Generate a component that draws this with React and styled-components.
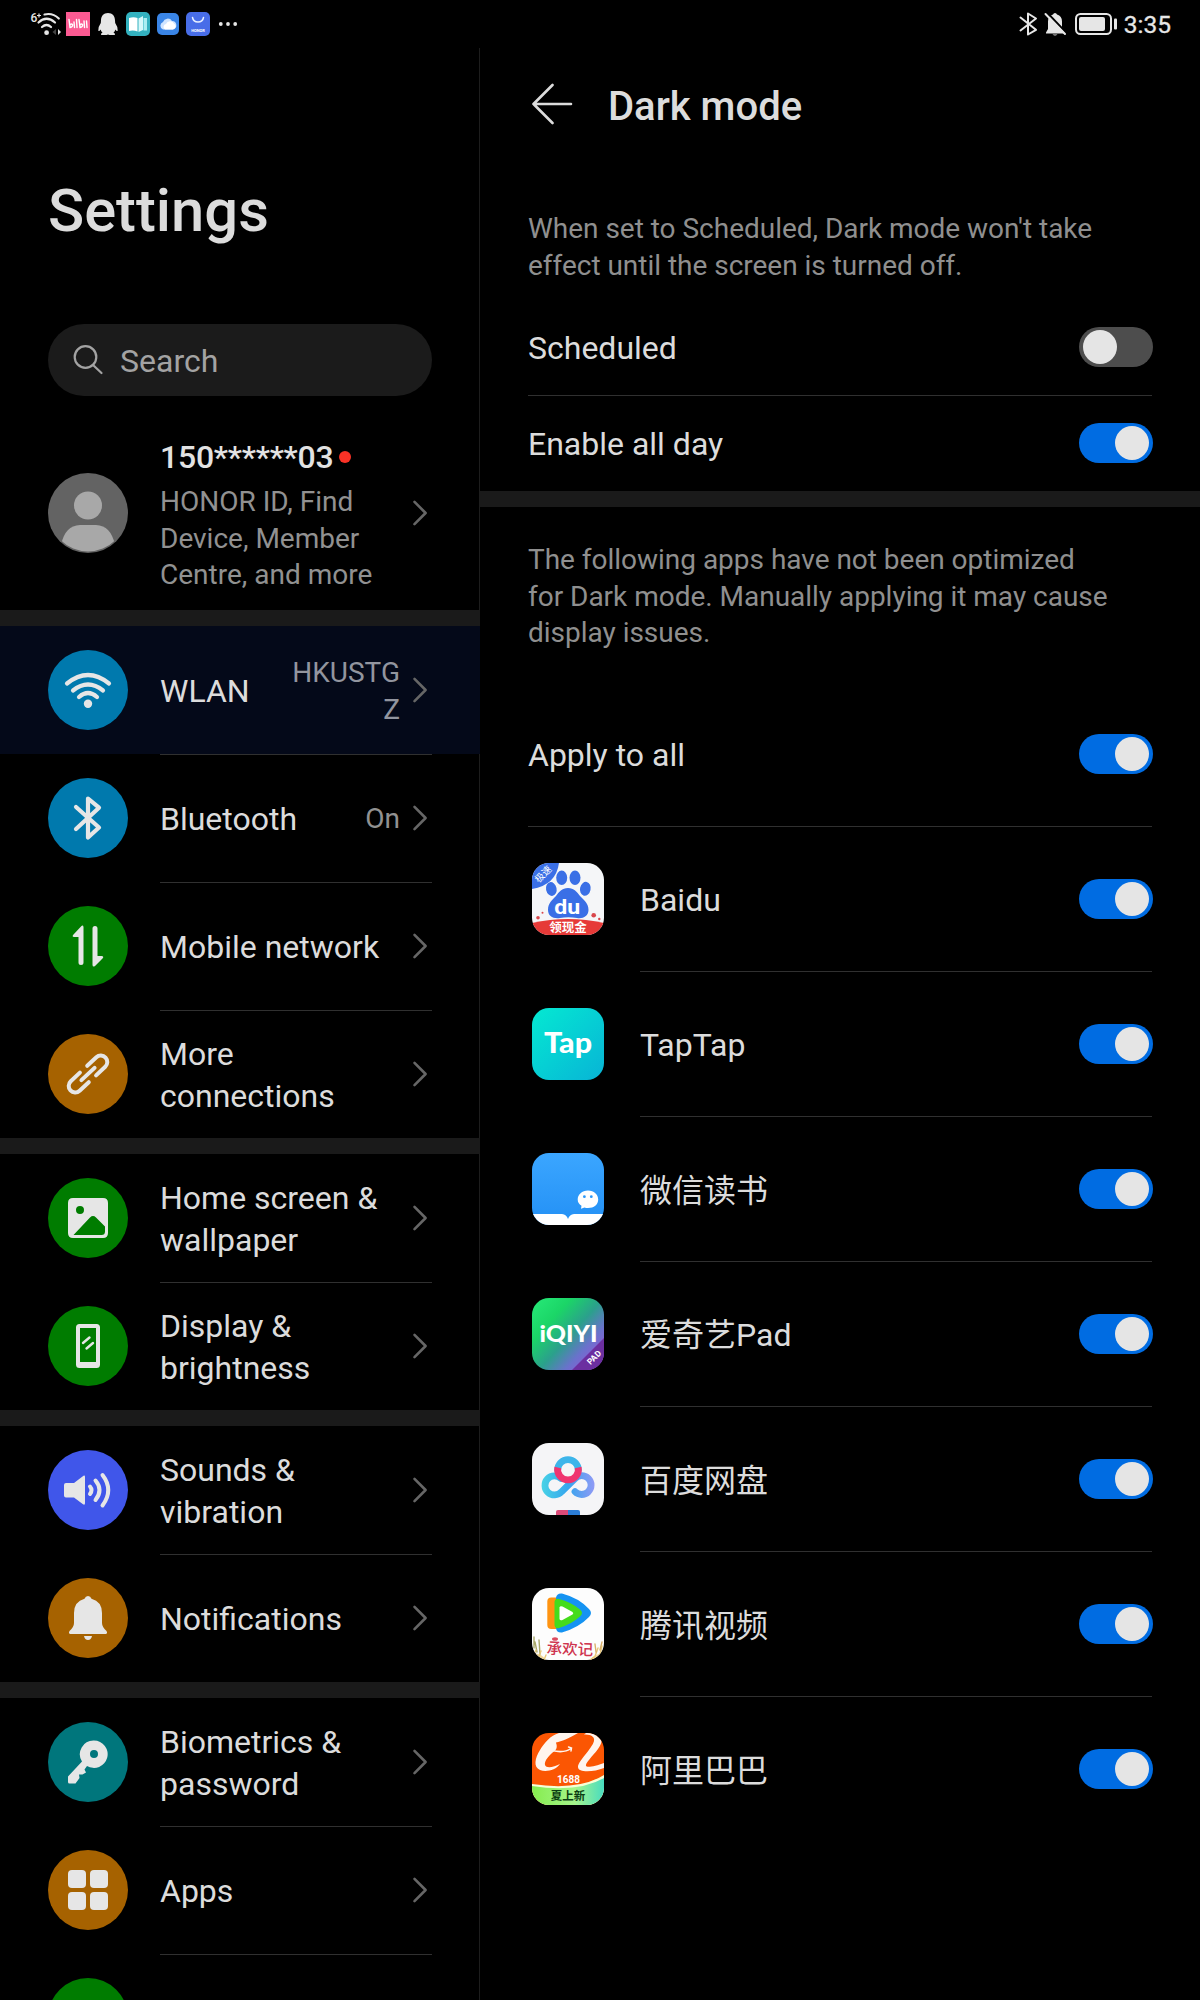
import React from "react";
import styled, { createGlobalStyle } from "styled-components";

const GlobalStyle = createGlobalStyle`
  * { box-sizing: border-box; }
  html, body { margin: 0; padding: 0; background: #000; }
  body { font-family: Roboto, "Noto Sans CJK SC", sans-serif; color: #dcdcdc; }
  svg { display: block; }
`;

const INK = "#e6e6e6";

/* ---------- layout ---------- */

const Screen = styled.div`
  width: 1200px;
  height: 2000px;
  overflow: hidden;
  display: flex;
  flex-direction: column;
  background: #000;
`;

const StatusBar = styled.header`
  flex: none;
  height: 48px;
  display: flex;
  align-items: center;
  justify-content: space-between;
  padding: 0 29px 0 30px;
`;

const StatusGroup = styled.div`
  display: flex;
  align-items: center;
`;

const StatusIcon = styled.svg`
  flex: none;
  overflow: visible;
  width: ${(p) => p.$w}px;
  height: 24px;
  margin-left: ${(p) => p.$gap || 0}px;
`;

const Clock = styled.span`
  margin-left: 7px;
  padding-top: 1px;
  font-size: 24.5px;
  line-height: 28px;
  color: ${INK};
  -webkit-text-stroke: 0.3px ${INK};
`;

const Panes = styled.div`
  flex: 1;
  min-height: 0;
  display: flex;
`;

const Sidebar = styled.nav`
  flex: none;
  width: 480px;
  border-right: 1px solid #1d1d1d;
  display: flex;
  flex-direction: column;
`;

const Detail = styled.main`
  flex: 1;
  display: flex;
  flex-direction: column;
`;

const Band = styled.div`
  flex: none;
  height: 16px;
  margin-right: ${(p) => (p.$bleed ? -1 : 0)}px;
  background: #1a1a1a;
`;

/* ---------- sidebar ---------- */

const PageTitle = styled.h1`
  margin: 0;
  padding: 128px 48px 0;
  font-size: 59.7px;
  line-height: 70px;
  font-weight: 500;
`;

const SearchBox = styled.div`
  flex: none;
  margin: 78px 47px 0 48px;
  height: 72px;
  border-radius: 36px;
  background: #1b1b1b;
  display: flex;
  align-items: center;
  gap: 14px;
  padding: 2px 24px 0;
  font-size: 32px;
  color: #a3a3a3;
`;

const Account = styled.div`
  flex: none;
  height: 214px;
  padding: 42px 47px 0 48px;
  display: flex;
`;

const Avatar = styled.svg`
  flex: none;
  width: 80px;
  height: 80px;
  margin: 35px 32px 0 0;
`;

const AccountText = styled.div`
  flex: 1;
`;

const AccountName = styled.div`
  display: flex;
  align-items: center;
  gap: 6px;
  font-size: 32px;
  line-height: 38px;
  font-weight: 500;
  letter-spacing: -0.24px;
  color: #e2e2e2;
`;

const RedDot = styled.span`
  width: 12px;
  height: 12px;
  border-radius: 50%;
  background: #fa3226;
`;

const AccountNote = styled.div`
  margin-top: 8px;
  font-size: 28px;
  line-height: 36.6px;
  color: #919191;
  white-space: pre-line;
`;

const Arrow = styled.svg`
  flex: none;
  width: 24px;
  height: 28px;
  margin-left: 8px;
  margin-top: ${(p) => p.$top || 0}px;
`;

const NavRow = styled.a`
  flex: none;
  height: 128px;
  padding: 0 47px 0 48px;
  display: flex;
  align-items: center;
  gap: 32px;
  margin-right: ${(p) => (p.$active ? -1 : 0)}px;
  padding-right: ${(p) => (p.$active ? 48 : 47)}px;
  background: ${(p) => (p.$active ? "#040919" : "transparent")};
`;

const Badge = styled.span`
  flex: none;
  width: 80px;
  height: 80px;
  border-radius: 50%;
  background: ${(p) => p.$color};
`;

const NavBody = styled.span`
  flex: 1;
  align-self: stretch;
  display: flex;
  align-items: center;
  justify-content: space-between;
  box-shadow: ${(p) => (p.$divided ? "inset 0 1px 0 #303030" : "none")};
`;

const NavLabel = styled.span`
  flex: 1;
  padding-top: 2px;
  font-size: 32px;
  line-height: 42px;
  white-space: pre-line;
`;

const NavValue = styled.span`
  padding-top: 3px;
  font-size: 28px;
  line-height: 36.6px;
  text-align: right;
  color: ${(p) => (p.$active ? "#92959f" : "#919191")};
  white-space: pre-line;
`;

/* ---------- detail pane ---------- */

const DetailHeader = styled.header`
  flex: none;
  height: 112px;
  padding: 0 48px 0 52px;
  display: flex;
  align-items: center;
  gap: 35px;
`;

const DetailTitle = styled.h2`
  margin: 0;
  padding-top: 4px;
  font-size: 40px;
  font-weight: 500;
`;

const Hint = styled.p`
  flex: none;
  height: ${(p) => p.$height}px;
  margin: 0;
  padding: ${(p) => p.$top}px 40px 0 48px;
  font-size: 28px;
  line-height: 36.6px;
  letter-spacing: -0.02px;
  color: #8f8f8f;
  white-space: pre-line;
`;

const SettingRow = styled.div`
  flex: none;
  height: ${(p) => p.$height}px;
  padding: 0 48px;
  display: flex;
`;

const SettingBody = styled.div`
  flex: 1;
  display: flex;
  align-items: center;
  justify-content: space-between;
  padding-top: ${(p) => (p.$tall ? 1 : 0)}px;
  font-size: 32px;
  box-shadow: ${(p) => (p.$divided ? "inset 0 1px 0 #303030" : "none")};
`;

const SettingLabel = styled.span`
  padding-top: ${(p) => (p.$han ? 4 : 2)}px;
  line-height: 42px;
`;

const AppRow = styled.div`
  flex: none;
  height: 145px;
  padding: 0 48px 0 ${(p) => (p.$first ? 48 : 52)}px;
  display: flex;
`;

const AppList = styled.div`
  display: flex;
  flex-direction: column;
`;

const AppTile = styled.div`
  flex: none;
  width: ${(p) => (p.$first ? 112 : 108)}px;
  padding: 37px 0 0 ${(p) => (p.$first ? 4 : 0)}px;
  box-shadow: ${(p) => (p.$first ? "inset 0 1px 0 #303030" : "none")};
`;

const AppIcon = styled.svg`
  width: 72px;
  height: 72px;
  border-radius: 17px;
  font-family: Roboto, "Noto Sans CJK SC", sans-serif;
`;

const Switch = styled.span`
  flex: none;
  width: 74px;
  height: 40px;
  margin-right: -1px;
  padding: 3px 4px;
  border-radius: 20px;
  display: flex;
  justify-content: ${(p) => (p.$on ? "flex-end" : "flex-start")};
  background: ${(p) => (p.$on ? "#006ce2" : "#4d4d4d")};
`;

const Knob = styled.span`
  width: 34px;
  height: 34px;
  border-radius: 50%;
  background: #e5e5e5;
`;

/* ---------- small drawings ---------- */

const Chevron = ({ top }) => (
  <Arrow viewBox="0 0 24 28" $top={top} fill="none" stroke="#666" strokeWidth="2.6" strokeLinecap="round" strokeLinejoin="round">
    <path d="M6.5 2.8 17.6 14 6.5 25.2" />
  </Arrow>
);

const Toggle = ({ on }) => (
  <Switch $on={on} role="switch" aria-checked={on}>
    <Knob />
  </Switch>
);

const line = { fill: "none", stroke: INK, strokeLinecap: "round", strokeLinejoin: "round" };

const glyphs = {
  wlan: (
    <g {...line} strokeWidth="4.2">
      <path d="M19 33.5Q40 16.5 61 33.5" />
      <path d="M25 40.5Q40 28.500 55 40.500" />
      <path d="M31 47Q40 39 49 47" />
      <circle cx="40" cy="53.800" r="4.200" fill={INK} stroke="none" />
    </g>
  ),
  bluetooth: (
    <path {...line} strokeWidth="4.200" d="M28 29 51 49.500 40 59.500V20.500L51 29.700 28 51" />
  ),
  mobile: (
    <g fill={INK}>
      <path d="M35.500 20V56.500A2.400 2.400 0 0 1 30.500 56.500V31H26Q23.500 30.500 25.500 28.500L33 20.500Q35 18.500 35.500 21Z" />
      <path d="M44.500 58V22.500A2.500 2.500 0 0 1 49.500 22.500V50H53.500Q56.500 50.500 54.500 52.500L47 60Q44.800 61.500 44.500 59Z" />
    </g>
  ),
  link: (
    <g {...line} strokeWidth="4" transform="rotate(-43 40 40)">
      <path d="M45 33.500H57.500A6.500 6.500 0 0 1 57.500 46.500H45" />
      <path d="M35 46.500H22.500A6.500 6.500 0 0 1 22.500 33.500H35" />
      <path d="M31 40H49" />
    </g>
  ),
  picture: (
    <path
      fill={INK}
      fillRule="evenodd"
      d="M25 20H55Q60 20 60 25V55Q60 60 55 60H25Q20 60 20 55V25Q20 20 25 20ZM32 28A4 4 0 1 0 32 36A4 4 0 1 0 32 28ZM25.500 57H53.500Q57 57 57 53.500V48.500L48 39.500Q45 36.700 42 39.500Z"
    />
  ),
  display: (
    <g>
      <path
        fill={INK}
        fillRule="evenodd"
        d="M31.500 18H48.500Q52 18 52 21.500V58.500Q52 62 48.500 62H31.500Q28 62 28 58.500V21.500Q28 18 31.500 18ZM32 22V56H48V22Z"
      />
      <path {...line} strokeWidth="2.400" d="M35 37 41.500 31.500M38.500 42.500 45 37" />
    </g>
  ),
  sound: (
    <g>
      <path fill={INK} d="M18 33H26L35.500 25.800Q37 25 37 27V53Q37 55.500 35 54.200L26 47.500H18Q16 47.500 16 45.500V35Q16 33 18 33Z" />
      <g {...line} strokeWidth="4">
        <path d="M42 36.500Q45 40 42 44" />
        <path d="M47.500 30.500Q55.500 40 47.500 50" />
        <path d="M54.500 25Q66 40 54.500 55.500" />
      </g>
    </g>
  ),
  bell: (
    <g fill={INK}>
      <path d="M40 18Q42.500 18 43.500 20.700Q54 23.500 54 35V45Q54 49 58.500 53Q60 55.500 57.500 56H22.500Q20 55.500 21.500 53Q26 49 26 45V35Q26 23.500 36.500 20.700Q37.500 18 40 18Z" />
      <path d="M36 58H44Q43.200 62 40 62Q36.800 62 36 58Z" />
    </g>
  ),
  key: (
    <path
      fill={INK}
      fillRule="evenodd"
      d="M46 18.500A13.700 13.700 0 1 1 39 44L36.500 47.500L38 50.500L34.500 52.500L31 52.500L31.500 56L27.500 61.500H21.500Q20 61.500 20 60V54.500L34 39.500A13.700 13.700 0 0 1 46 18.500ZM46 28A4 4 0 1 0 46 36A4 4 0 1 0 46 28Z"
    />
  ),
  apps: (
    <g fill={INK}>
      <rect x="20" y="20" width="18" height="18" rx="4" />
      <rect x="42" y="20" width="18" height="18" rx="4" />
      <rect x="20" y="42" width="18" height="18" rx="4" />
      <rect x="42" y="42" width="18" height="18" rx="4" />
    </g>
  ),
};

const appIcons = {
  baidu: (
    <>
      <rect width="72" height="72" fill="#f5f6f8" />
      <path d="M0 0H27Q24 22 0 26Z" fill="#3a6fe6" />
      <text x="11" y="14.500" fontSize="9.500" fill="#fff" textAnchor="middle" transform="rotate(-45 11 11)">极速</text>
      <g fill="#3a6fe6">
        <ellipse cx="19.300" cy="26" rx="5.300" ry="7" transform="rotate(-12 19.300 26)" />
        <ellipse cx="29.700" cy="14.800" rx="5.500" ry="7.200" />
        <ellipse cx="43" cy="14.800" rx="5.500" ry="7.200" />
        <ellipse cx="53.300" cy="25.800" rx="5.300" ry="7" transform="rotate(12 53.300 25.800)" />
        <path d="M36 25C42 25 45 29 48 33C52 37.500 56.500 40 56.500 47C56.500 53 51 56 45 55Q36 53.500 28 55C21 56 16 53 16 47C16 40 20 37.500 24 33C27 29 30 25 36 25Z" />
      </g>
      <text x="35.300" y="51" fontSize="21" fontWeight="700" fill="#fff" textAnchor="middle" textLength="26" lengthAdjust="spacingAndGlyphs">du</text>
      <path d="M0 60Q36 52 72 60V72H0Z" fill="#e63a38" />
      <text x="36" y="69" fontSize="12.500" fontWeight="700" fill="#fff" textAnchor="middle">领现金</text>
      <g fill="#d9474c">
        <circle cx="6" cy="54.700" r="1.800" />
        <circle cx="10.500" cy="49.700" r="1" />
        <circle cx="61.700" cy="52.300" r="2.300" />
        <circle cx="67.300" cy="56" r="1.200" />
      </g>
    </>
  ),
  taptap: (
    <>
      <defs>
        <linearGradient id="tap" x1="0" y1="0" x2="1" y2="1">
          <stop offset="0" stopColor="#04e9d2" />
          <stop offset="1" stopColor="#08b4d6" />
        </linearGradient>
      </defs>
      <rect width="72" height="72" fill="url(#tap)" />
      <text x="12" y="44.500" fontSize="28" fontWeight="900" fontFamily="Lato, sans-serif" fill="#fff" textLength="48" lengthAdjust="spacingAndGlyphs">Tap</text>
    </>
  ),
  weread: (
    <>
      <defs>
        <linearGradient id="read" x1="0" y1="0" x2="0" y2="1">
          <stop offset="0" stopColor="#3ba6ff" />
          <stop offset="1" stopColor="#2390f5" />
        </linearGradient>
      </defs>
      <rect width="72" height="72" fill="url(#read)" />
      <path d="M0 61H30Q34.500 61.500 36 66Q37.500 61.500 42 61H72V72H0Z" fill="#fff" />
      <path d="M56 37.500C62 37.500 66.200 41.500 66.200 46.500C66.200 51.500 62 55 56 55Q54 55 52.500 54.400L49 55.800L49.500 52.800Q45.700 50.500 45.700 46.500C45.700 41.500 50 37.500 56 37.500Z" fill="#fff" />
      <circle cx="52.400" cy="43.700" r="1.400" fill="#2d99fa" />
      <circle cx="59.300" cy="43.700" r="1.400" fill="#2d99fa" />
    </>
  ),
  iqiyi: (
    <>
      <defs>
        <linearGradient id="qiyi" x1="0" y1="0" x2="1" y2="0.900">
          <stop offset="0" stopColor="#27ea78" />
          <stop offset="0.300" stopColor="#1bd567" />
          <stop offset="0.550" stopColor="#2ba08c" />
          <stop offset="0.750" stopColor="#6a72cc" />
          <stop offset="1" stopColor="#a050dc" />
        </linearGradient>
      </defs>
      <rect width="72" height="72" fill="url(#qiyi)" />
      <path d="M72 40V72H40Z" fill="#6c2fa0" />
      <text x="7.500" y="44.300" fontSize="22.500" fontWeight="900" fontFamily="Lato, sans-serif" fill="#fff" textLength="58" lengthAdjust="spacingAndGlyphs">iQIYI</text>
      <text x="62" y="62.500" fontSize="8.500" fontWeight="700" fill="#fff" textAnchor="middle" transform="rotate(-45 62 59.500)">PAD</text>
    </>
  ),
  netdisk: (
    <>
      <defs>
        <linearGradient id="disk" gradientUnits="userSpaceOnUse" x1="10" y1="0" x2="62" y2="0">
          <stop offset="0" stopColor="#48d2e6" />
          <stop offset="0.500" stopColor="#35a5ee" />
          <stop offset="1" stopColor="#8f9af5" />
        </linearGradient>
      </defs>
      <rect width="72" height="72" fill="#f5f5f7" />
      <g fill="none" strokeWidth="6.800" strokeLinecap="round">
        <path stroke="url(#disk)" d="M43 48.700A9.400 9.400 0 1 0 43 35.500L29.500 48.800A9.500 9.500 0 1 1 29 35.500" />
        <path stroke="#3db5ea" d="M25.700 27A10.300 10.300 0 0 1 46.300 27" />
        <path stroke="#ef3570" strokeLinecap="butt" d="M25.800 24.500A10.400 10.400 0 1 0 46.200 24.500" />
      </g>
      <path d="M26 67H36V72H24V69Q24 67 26 67Z" fill="#dc4a78" />
      <path d="M36 67H46Q48 67 48 69V72H36Z" fill="#2c7ed8" />
    </>
  ),
  tencent: (
    <>
      <rect width="72" height="72" fill="#fdfdfd" />
      <rect x="15.300" y="9.500" width="16" height="31.500" rx="4" fill="#ff9412" />
      <path d="M24 10Q24.500 5 30 5.500Q47 10 57 21Q61 25 57 29Q47 39.500 30 44.500Q24.500 45 24 40Z" fill="#1593f2" />
      <path d="M22.500 14Q23 10 27 11Q39 14 48 21.500Q52 25 48 28.500Q39 36.500 27 40Q23 41 22.500 37Z" fill="#45dc1c" />
      <path d="M27.500 19.500Q28 17.500 30.500 18.500L40.500 24Q42 25.200 40.500 26.500L30.500 32Q28 33 27.500 31Z" fill="#fff" />
      <path d="M0 66Q8 64 14 72H0ZM72 64Q64 66 58 72H72Z" fill="#efd69a" />
      <g fill="none" strokeLinecap="round" strokeWidth="1.400">
        <path stroke="#a8a86a" d="M2 60V49M5 64 3 54M8 66 7 52" />
        <path stroke="#e8c878" d="M1 68 4 62M6 71 9 63M12 72 14 67M62 71 66 60M67 71 70 58M58 72 63 68" />
        <path stroke="#d9b06a" d="M68 62 70 54M64 64 63 56" />
      </g>
      <text x="38" y="66.500" fontSize="15.500" fontWeight="500" fill="#cf3550" textAnchor="middle" transform="rotate(2 38 62)">承欢记</text>
      <ellipse cx="23" cy="51" rx="3" ry="1.800" fill="#dc4c60" />
    </>
  ),
  alibaba: (
    <>
      <defs>
        <linearGradient id="ali" x1="0" y1="0" x2="1" y2="0">
          <stop offset="0" stopColor="#86ec4e" />
          <stop offset="0.600" stopColor="#a5f58c" />
          <stop offset="1" stopColor="#48dcc0" />
        </linearGradient>
      </defs>
      <rect width="72" height="72" fill="#fb5603" />
      <path d="M46 0C36 6 30 8 24 9.500C24 11 26 14 23.500 17C17 22 12 28 13 32C14.500 36 22 34 28 31C24 37 14 39.500 8 37C1 34 3 25 8 17C13 9 18 3 27 0Z" fill="#fff5ee" />
      <path d="M24 9.500Q13 14 9 25Q15 20 22 18Q25 15 24 9.500Z" fill="#fff5ee" />
      <path d="M20 17.500Q32 20.500 39 15.500M36.500 14 39.500 15 39 18" fill="none" stroke="#fff5ee" strokeWidth="1.500" strokeLinecap="round" />
      <path d="M54 0C72 0 72 8 66 16C60 24 53 30 54 33C55 35 64 33 72 30V35C62 39 46 40 46 34C46 28 60 16 62 8C63 4 59 1 52 1.500Z" fill="#fff5ee" />
      <text x="36.500" y="50" fontSize="11.500" fontWeight="700" fill="#fff" textAnchor="middle" textLength="23" lengthAdjust="spacingAndGlyphs">1688</text>
      <path d="M0 51Q46 58 72 42V72H0Z" fill="#f6ffd8" />
      <path d="M0 53Q46 60 72 45V72H0Z" fill="url(#ali)" />
      <text x="36" y="67" fontSize="11.500" fontWeight="700" fill="#0b3d12" textAnchor="middle">夏上新</text>
    </>
  ),
};

/* ---------- data ---------- */

const sections = [
  [
    { id: "wlan", label: "WLAN", color: "#0079ad", value: "HKUSTG\nZ", active: true },
    { id: "bluetooth", label: "Bluetooth", color: "#0079ad", value: "On" },
    { id: "mobile", label: "Mobile network", color: "#007c00" },
    { id: "link", label: "More\nconnections", color: "#a66200" },
  ],
  [
    { id: "picture", label: "Home screen &\nwallpaper", color: "#007c00" },
    { id: "display", label: "Display &\nbrightness", color: "#007c00" },
  ],
  [
    { id: "sound", label: "Sounds &\nvibration", color: "#4056ea" },
    { id: "bell", label: "Notifications", color: "#a66200" },
  ],
  [
    { id: "key", label: "Biometrics &\npassword", color: "#00767c" },
    { id: "apps", label: "Apps", color: "#a66200" },
    { id: "more", label: "", color: "#007c00", clipped: true },
  ],
];

const apps = [
  { id: "baidu", name: "Baidu" },
  { id: "taptap", name: "TapTap" },
  { id: "weread", name: "微信读书", han: true },
  { id: "iqiyi", name: "爱奇艺Pad" },
  { id: "netdisk", name: "百度网盘", han: true },
  { id: "tencent", name: "腾讯视频", han: true },
  { id: "alibaba", name: "阿里巴巴", han: true },
];

/* ---------- parts ---------- */

const Status = () => (
  <StatusBar>
    <StatusGroup>
      <StatusIcon $w={32} viewBox="0 0 32 24">
        <text x="0.500" y="9.500" fontSize="12" fontWeight="500" fontFamily="Roboto, sans-serif" fill={INK}>6</text>
        <path d="M7 3.500H11M9 1.500V5.500" stroke={INK} strokeWidth="1.200" />
        <g fill="none" stroke={INK} strokeWidth="2.200" strokeLinecap="round">
          <path d="M14.500 2.500Q22.500 0.500 28.800 6.500" />
          <path d="M8.500 10.500Q16.500 3 25 10.500" />
          <path d="M12 15Q16.500 11 21 15" />
        </g>
        <circle cx="16.600" cy="20.700" r="2.400" fill={INK} />
        <path d="M26 17V23L22.500 20Z" fill="#444" />
        <path d="M28 17V23L31 20Z" fill={INK} />
      </StatusIcon>
      <StatusIcon $w={24} $gap={4} viewBox="0 0 24 24">
        <rect width="24" height="24" fill="#fb5a92" />
        <g fill="none" stroke="#fff" strokeWidth="1.400" strokeLinecap="round">
          <path d="M3 7.500 4 15.500Q7 15 6.500 12.500Q5.500 11.500 4 13M8 10 8.500 15.500M10.500 7.500 11 15.500M13 7.500 14 15.500Q17 15 16.500 12.500Q15.500 11.500 14 13M18 9 18.500 15.500M20.500 9 21 15.500" />
        </g>
      </StatusIcon>
      <StatusIcon $w={20} $gap={8} viewBox="0 0 20 24">
        <path
          fill={INK}
          d="M10 1C14.500 1 17 4 17 8.500L17.200 11Q20 15 19.700 18.500Q19 20 17.400 17.500Q17 19.500 15.500 20.800Q18 22 16.500 23H11.500L10 22.500L8.500 23H3.500Q2 22 4.500 20.800Q3 19.500 2.600 17.500Q1 20 0.300 18.500Q0 15 2.800 11L3 8.500C3 4 5.500 1 10 1Z"
        />
      </StatusIcon>
      <StatusIcon $w={24} $gap={8} viewBox="0 0 24 24">
        <rect width="24" height="24" rx="5" fill="#33b1bf" />
        <path d="M3 6Q7.500 4.500 11.500 6V19.500Q7.500 18 3 19Z" fill="#fff" />
        <path d="M12.500 6.500 17 4V18L12.500 20Z" fill="#d6f8fa" />
        <path d="M17.500 6H21V18.500H17.500Z" fill="#aaeef2" />
      </StatusIcon>
      <StatusIcon $w={22} $gap={7} viewBox="0 0 22 24">
        <rect y="1" width="22" height="22" rx="5" fill="#3a85e6" />
        <path d="M6 17.500A4 4 0 0 1 6 10A5 5 0 0 1 15 9A4.300 4.300 0 0 1 16 17.500Z" fill="#cfe4ff" />
        <path d="M8 17.500A3 3 0 0 1 9 12A4.500 4.500 0 0 1 17 11.500A3.200 3.200 0 0 1 16 17.500Z" fill="#fff" />
      </StatusIcon>
      <StatusIcon $w={24} $gap={7} viewBox="0 0 24 24">
        <rect width="24" height="24" rx="5" fill="#486de8" />
        <path d="M6.500 5.500A5.600 5.600 0 0 0 17.500 5.500" fill="none" stroke="#e8f0ff" strokeWidth="1.500" strokeLinecap="round" />
        <text x="12" y="20" fontSize="4" fontWeight="700" fontFamily="Roboto, sans-serif" fill="#fff" textAnchor="middle">HONOR</text>
      </StatusIcon>
      <StatusIcon $w={18} $gap={9} viewBox="0 0 18 24" fill={INK}>
        <circle cx="1.800" cy="12" r="1.900" />
        <circle cx="9" cy="12" r="1.900" />
        <circle cx="16.200" cy="12" r="1.900" />
      </StatusIcon>
    </StatusGroup>
    <StatusGroup>
      <StatusIcon $w={18} viewBox="0 0 18 24" fill="none" stroke={INK} strokeWidth="2" strokeLinejoin="round" strokeLinecap="round">
        <path d="M1.500 5.500 17 17.800 9 22.500V1.500L17 6.500 1.500 18.500" />
      </StatusIcon>
      <StatusIcon $w={21} $gap={8} viewBox="0 0 21 24">
        <path d="M10 1Q11.500 1 12 2.500Q17 4 17 9.500V15.500L19.500 20.500V21.500H1V20.500L3 17V9.500Q3 4 8 2.500Q8.500 1 10 1Z" fill={INK} />
        <path d="M7.500 22.500H12.500Q10 24.500 7.500 22.500Z" fill={INK} />
        <path d="M2 0.500 21.500 21" stroke="#000" strokeWidth="2" />
        <path d="M0.500 2 20 22" stroke={INK} strokeWidth="2" strokeLinecap="round" />
      </StatusIcon>
      <StatusIcon $w={42} $gap={9} viewBox="0 0 42 24">
        <rect x="1" y="2" width="35" height="20" rx="4.500" fill="none" stroke={INK} strokeWidth="2" />
        <rect x="4" y="5" width="26" height="14" rx="2" fill={INK} />
        <rect x="39" y="6.500" width="3" height="11" rx="1" fill={INK} />
      </StatusIcon>
      <Clock>3:35</Clock>
    </StatusGroup>
  </StatusBar>
);

const NavItem = ({ item, divided }) => (
  <NavRow $active={item.active}>
    <Badge $color={item.color}>
      <svg width="80" height="80" viewBox="0 0 80 80">{glyphs[item.id]}</svg>
    </Badge>
    <NavBody $divided={divided}>
      <NavLabel>{item.label}</NavLabel>
      {item.value && <NavValue $active={item.active}>{item.value}</NavValue>}
      {!item.clipped && <Chevron />}
    </NavBody>
  </NavRow>
);

export default function App() {
  return (
    <>
      <GlobalStyle />
      <Screen>
        <Status />
        <Panes>
          <Sidebar>
            <PageTitle>Settings</PageTitle>
            <SearchBox>
              <svg width="34" height="34" viewBox="0 0 34 34" fill="none" stroke="#a3a3a3" strokeWidth="2.200" strokeLinecap="round">
                <circle cx="13.500" cy="13" r="10.800" />
                <path d="M21 21 29.500 29" />
              </svg>
              Search
            </SearchBox>
            <Account>
              <Avatar viewBox="0 0 80 80">
                <clipPath id="face"><circle cx="40" cy="40" r="38.500" /></clipPath>
                <circle cx="40" cy="40" r="40" fill="#636363" />
                <g clipPath="url(#face)" fill="#a8a8a8">
                  <circle cx="40" cy="32.500" r="14" />
                  <path d="M13 72Q17 52.500 32 52H48Q63 52.500 67 72V80H13Z" />
                </g>
              </Avatar>
              <AccountText>
                <AccountName>150******03<RedDot /></AccountName>
                <AccountNote>{"HONOR ID, Find\nDevice, Member\nCentre, and more"}</AccountNote>
              </AccountText>
              <Chevron top={61} />
            </Account>
            {sections.map((items, s) => (
              <React.Fragment key={s}>
                <Band $bleed />
                {items.map((item, i) => (
                  <NavItem key={item.id} item={item} divided={i > 0} />
                ))}
              </React.Fragment>
            ))}
          </Sidebar>
          <Detail>
            <DetailHeader>
              <svg width="41" height="42" viewBox="0 0 41 42" fill="none" stroke="#dcdcdc" strokeWidth="2.600" strokeLinecap="round" strokeLinejoin="round">
                <path d="M20.500 2 1.500 21 20.500 40M1.500 21H39" />
              </svg>
              <DetailTitle>Dark mode</DetailTitle>
            </DetailHeader>
            <Hint $height={139} $top={51}>{"When set to Scheduled, Dark mode won't take\neffect until the screen is turned off."}</Hint>
            <SettingRow $height={96}>
              <SettingBody>
                <SettingLabel>Scheduled</SettingLabel>
                <Toggle on={false} />
              </SettingBody>
            </SettingRow>
            <SettingRow $height={96}>
              <SettingBody $divided>
                <SettingLabel>Enable all day</SettingLabel>
                <Toggle on />
              </SettingBody>
            </SettingRow>
            <Band />
            <Hint $height={175} $top={35}>{"The following apps have not been optimized\nfor Dark mode. Manually applying it may cause\ndisplay issues."}</Hint>
            <SettingRow $height={144}>
              <SettingBody>
                <SettingLabel>Apply to all</SettingLabel>
                <Toggle on />
              </SettingBody>
            </SettingRow>
            <AppList>
              {apps.map((app, i) => (
                <AppRow key={app.id} $first={i === 0}>
                  <AppTile $first={i === 0}>
                    <AppIcon viewBox="0 0 72 72">{appIcons[app.id]}</AppIcon>
                  </AppTile>
                  <SettingBody $divided $tall>
                    <SettingLabel $han={app.han}>{app.name}</SettingLabel>
                    <Toggle on />
                  </SettingBody>
                </AppRow>
              ))}
            </AppList>
          </Detail>
        </Panes>
      </Screen>
    </>
  );
}
